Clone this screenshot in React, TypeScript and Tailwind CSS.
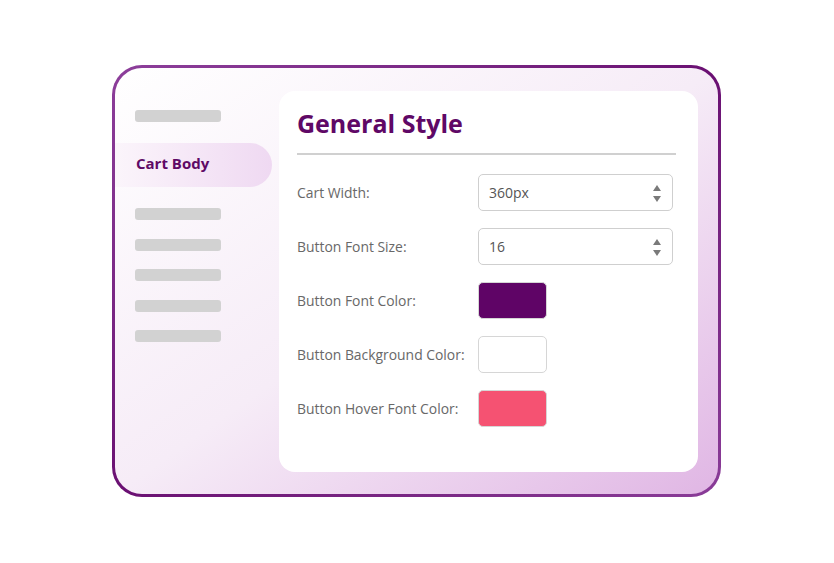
import React from "react";

const FONT = { fontFamily: '"Open Sans", "Liberation Sans", sans-serif' };

const rows: { label: string; kind: "number" | "color"; value: string }[] = [
  { label: "Cart Width:", kind: "number", value: "360px" },
  { label: "Button Font Size:", kind: "number", value: "16" },
  { label: "Button Font Color:", kind: "color", value: "#5f0466" },
  { label: "Button Background Color:", kind: "color", value: "#ffffff" },
  { label: "Button Hover Font Color:", kind: "color", value: "#f55272" },
];

function Spinner() {
  return (
    <svg width="10" height="20" viewBox="0 0 10 20" className="shrink-0">
      <polygon points="5,2 9,8 1,8" fill="#7a7a7a" />
      <polygon points="1,13 9,13 5,19" fill="#7a7a7a" />
    </svg>
  );
}

function Bar() {
  return <div className="ml-[20px] h-[12px] w-[86px] rounded-[3px] bg-[#d2d2d2]" />;
}

export default function App() {
  return (
    <div className="min-h-[563px] w-[834px] bg-white pl-[112px] pt-[65px]" style={FONT}>
      <div className="h-[432px] w-[609px] rounded-[30px] bg-gradient-to-br from-[#8d3f9b] via-[#6a0f72] to-[#8a3c98] p-[3px]">
        <div className="flex h-full w-full rounded-[27px] bg-gradient-to-br from-white via-[#f6ecf7] to-[#e0b6e4]">
          {/* sidebar */}
          <div className="flex w-[164px] flex-col pt-[42px]">
            <Bar />
            <div className="mt-[21px] flex h-[44px] w-[157px] items-center rounded-r-full bg-gradient-to-r from-[#fbf5fb] to-[#efd9f2] pb-[4px] pl-[21px] text-[15px] font-bold text-[#5f0a66]">
              Cart Body
            </div>
            <div className="mt-[21px] flex flex-col gap-[18.5px]">
              <Bar />
              <Bar />
              <Bar />
              <Bar />
              <Bar />
            </div>
          </div>

          {/* panel */}
          <div className="mt-[23px] h-[381px] w-[419px] rounded-[16px] bg-white px-[18px] pt-[14px]">
            <h1 className="text-[25px] font-bold leading-[36px] text-[#5f0866]">General Style</h1>
            <div className="mt-[12px] h-[2px] w-[379px] bg-[#d0d0d0]" />
            <div className="mt-[19px] flex flex-col gap-[17px]">
              {rows.map((r) => (
                <div key={r.label} className="flex h-[37px] items-center">
                  <div className="w-[181px] pt-[1px] text-[13.9px] text-[#686868]">{r.label}</div>
                  {r.kind === "number" ? (
                    <div className="flex h-[37px] w-[195px] items-center justify-between rounded-[5px] border border-[#cfcfcf] pl-[10px] pr-[10px] text-[14px] text-[#555555]">
                      <span>{r.value}</span>
                      <Spinner />
                    </div>
                  ) : (
                    <div
                      className="h-[37px] w-[69px] rounded-[5px] border border-[#d6d6d6]"
                      style={{ background: r.value }}
                    />
                  )}
                </div>
              ))}
            </div>
          </div>
        </div>
      </div>
    </div>
  );
}
